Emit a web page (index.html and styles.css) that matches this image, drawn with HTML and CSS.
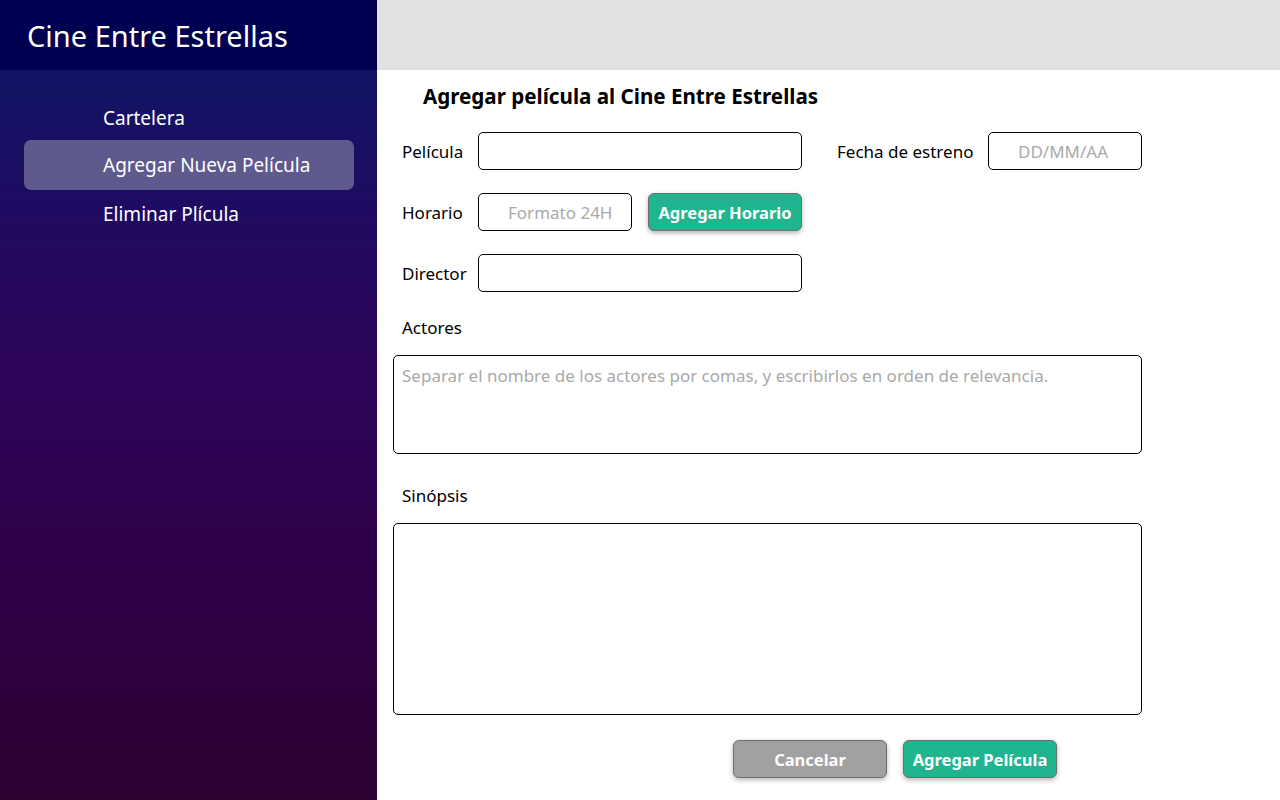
FILE: index.html
```html
<!DOCTYPE html>
<html lang="es">
<head>
<meta charset="utf-8">
<title>Cine Entre Estrellas</title>
<link rel="stylesheet" href="styles.css">
</head>
<body>
<aside class="sidebar">
  <div class="brand">Cine Entre Estrellas</div>
  <nav class="nav">
    <a class="nav-item">Cartelera</a>
    <a class="nav-item active">Agregar Nueva Película</a>
    <a class="nav-item">Eliminar Plícula</a>
  </nav>
</aside>
<main class="main">
  <div class="topbar"></div>
  <section class="content">
    <h1 class="title">Agregar película al Cine Entre Estrellas</h1>
    <div class="row">
      <label class="label">Película</label>
      <input class="field wide" type="text">
      <label class="label date-label">Fecha de estreno</label>
      <input class="field narrow" type="text" placeholder="DD/MM/AA">
    </div>
    <div class="row">
      <label class="label">Horario</label>
      <input class="field narrow" type="text" placeholder="Formato 24H">
      <button class="btn green add-time">Agregar Horario</button>
    </div>
    <div class="row">
      <label class="label">Director</label>
      <input class="field wide" type="text">
    </div>
    <div class="block-label">Actores</div>
    <textarea class="area actors" placeholder="Separar el nombre de los actores por comas, y escribirlos en orden de relevancia."></textarea>
    <div class="block-label synopsis-label">Sinópsis</div>
    <textarea class="area synopsis"></textarea>
    <div class="actions">
      <button class="btn gray">Cancelar</button>
      <button class="btn green">Agregar Película</button>
    </div>
  </section>
</main>
</body>
</html>
```

FILE: styles.css
```css
* { box-sizing: border-box; }
html, body { margin: 0; padding: 0; }
body {
  display: flex;
  width: 1280px;
  height: 800px;
  overflow: hidden;
  font-family: "Noto Sans", "Open Sans", sans-serif;
  background: #ffffff;
  color: #000;
}
.sidebar {
  width: 377px;
  height: 800px;
  display: flex;
  flex-direction: column;
  background: linear-gradient(180deg, #0b1a63 0%, #1e0c62 25%, #2c055a 45%, #2f0049 70%, #2e0030 100%);
}
.brand {
  height: 70px;
  flex: none;
  background: #000050;
  color: #fff;
  font-size: 29px;
  padding-left: 27px;
  line-height: 72px;
}
.nav {
  display: flex;
  flex-direction: column;
  padding: 24px 23px 0 24px;
}
.nav-item {
  height: 48px;
  line-height: 48px;
  padding-left: 79px;
  color: #fff;
  font-size: 19px;
  border-radius: 7px;
}
.nav-item.active {
  background: #5e5a8e;
  height: 50px;
  line-height: 50px;
  margin: -2px 0 0;
}
.main {
  flex: 1;
  display: flex;
  flex-direction: column;
}
.topbar {
  height: 70px;
  background: #e1e1e1;
  flex: none;
}
.content {
  padding: 0 0 0 16px;
  display: flex;
  flex-direction: column;
}
.title {
  margin: 12px 0 0 30px;
  font-size: 20.6px;
  font-weight: 700;
  line-height: 28px;
  height: 28px;
}
.row {
  display: flex;
  align-items: center;
  padding-left: 9px;
  margin-top: 22px;
  height: 38px;
}
.row + .row { margin-top: 23px; }
.label {
  width: 76px;
  font-size: 17px;
  line-height: 24px;
  padding-top: 1px;
}
.date-label {
  width: 151px;
  margin-left: 35px;
}
.field {
  height: 38px;
  border: 1px solid #000;
  border-radius: 5px;
  font-family: inherit;
  font-size: 17px;
  padding: 0 8px 0 29px;
  outline: none;
  background: #fff;
}
.field::placeholder { color: #a9a9a9; }
.wide { width: 324px; }
.narrow { width: 154px; }
.btn {
  width: 154px;
  height: 38px;
  border: 1px solid #6e6e6e;
  border-radius: 6px;
  color: #fff;
  font-family: inherit;
  font-weight: 700;
  font-size: 16.5px;
  box-shadow: 0 2px 5px rgba(0,0,0,0.3);
  padding: 0;
}
.green { background: #20b58f; }
.gray { background: #a1a1a1; }
.add-time { margin-left: 16px; }
.block-label {
  padding-left: 9px;
  font-size: 17px;
  line-height: 24px;
  margin-top: 24px;
}
.synopsis-label { margin-top: 30px; }
.area {
  width: 749px;
  border: 1px solid #000;
  border-radius: 5px;
  font-family: inherit;
  font-size: 17px;
  padding: 8px 8px;
  resize: none;
  outline: none;
  display: block;
  margin-top: 15px;
}
.area::placeholder { color: #a9a9a9; }
.actors { height: 99px; }
.synopsis { height: 192px; }
.actions {
  display: flex;
  gap: 16px;
  margin-top: 25px;
  padding-left: 340px;
}
```
